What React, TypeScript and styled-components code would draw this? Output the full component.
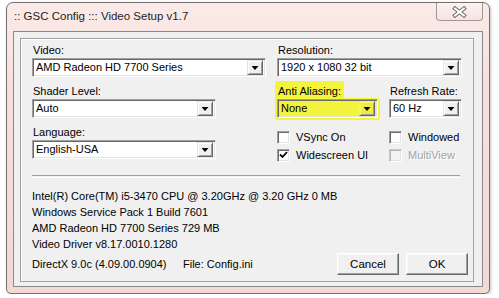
import styled, { createGlobalStyle } from "styled-components";

const GlobalStyle = createGlobalStyle`
  body {
    margin: 0;
    background: #fff;
    font-family: "Liberation Sans", Arial, sans-serif;
    font-size: 11px;
    color: #000;
  }
`;

const Window = styled.div`
  margin: 2px 0 0 6px;
  width: 484px;
  height: 292px;
  box-sizing: border-box;
  border: 1px solid #76706f;
  border-radius: 7px 7px 5px 5px;
  background: linear-gradient(#fbeae8, #f6dfdb 30%, #f3d9d5);
  box-shadow: 1px 1px 3px rgba(0, 0, 0, 0.25);
  display: flex;
  flex-direction: column;
`;

const TitleBar = styled.div`
  height: 28px;
  display: flex;
  justify-content: space-between;
  align-items: flex-start;
  padding: 0 6px 0 7px;
`;

const Title = styled.span`
  margin-top: 6px;
  line-height: 14px;
  font-size: 11.5px;
  color: #1e1e1e;
`;

const CloseBtn = styled.div`
  width: 47px;
  height: 18px;
  box-sizing: border-box;
  border: 1px solid #a39494;
  border-top: none;
  border-radius: 0 0 4px 4px;
  background: linear-gradient(#fcf2f1, #f6e3e1);
  display: flex;
  align-items: center;
  justify-content: center;
`;

const Client = styled.div`
  flex: 1;
  margin: 0 6px 6px 6px;
  border: 1px solid #8c8888;
  background: #f0f0f0;
  padding: 6px 8px 4px 6px;
  display: flex;
`;

const Group = styled.div`
  flex: 1;
  border: 1px solid #a0a0a0;
  box-shadow: inset 1px 1px 0 #fff;
  padding: 4px 11px 6px 11px;
  display: flex;
  flex-direction: column;
`;

const Top = styled.div`
  display: flex;
  gap: 11px;
`;

const Column = styled.div<{ $w: number }>`
  width: ${(p) => p.$w}px;
  display: flex;
  flex-direction: column;
  gap: 7px;
`;

const Pair = styled.div`
  display: flex;
  justify-content: space-between;
`;

const Field = styled.div`
  display: flex;
  flex-direction: column;
  align-items: flex-start;
  gap: 1px;
`;

const Label = styled.span<{ $hl?: boolean }>`
  line-height: 14px;
  height: 14px;
  padding: 0 ${(p) => (p.$hl ? "3px" : "1px")};
  margin-left: ${(p) => (p.$hl ? "-2px" : "0")};
  margin-top: ${(p) => (p.$hl ? "-3px" : "0")};
  padding-top: ${(p) => (p.$hl ? "3px" : "0")};
  background: ${(p) => (p.$hl ? "#f4f33e" : "transparent")};
  border-radius: 2px 2px 0 0;
`;

const SelectWrap = styled.div<{ $hl?: boolean }>`
  background: ${(p) => (p.$hl ? "#f4f33e" : "transparent")};
  margin: ${(p) => (p.$hl ? "-1px -2px -2px -2px" : "0")};
  padding: ${(p) => (p.$hl ? "1px 2px 2px 2px" : "0")};
  border-radius: 0 3px 3px 3px;
`;

const Select = styled.div<{ $w: number; $hl?: boolean }>`
  width: ${(p) => p.$w}px;
  height: 19px;
  box-sizing: border-box;
  display: flex;
  align-items: center;
  justify-content: space-between;
  background: ${(p) => (p.$hl ? "#f4f33e" : "#fff")};
  border: 1px solid;
  border-color: #a0a0a0 #fff #fff #a0a0a0;
  box-shadow: inset 1px 1px 0 #696969, inset -1px -1px 0 #e3e3e3;
  padding: 2px 2px 2px 3px;
`;

const Value = styled.span`
  line-height: 15px;
  white-space: nowrap;
`;

const ArrowBtn = styled.span<{ $hl?: boolean }>`
  width: 16px;
  height: 15px;
  box-sizing: border-box;
  background: ${(p) => (p.$hl ? "#eeed3c" : "#f0f0f0")};
  border: 1px solid;
  border-color: #e3e3e3 #696969 #696969 #e3e3e3;
  box-shadow: inset 1px 1px 0 ${(p) => (p.$hl ? "#f8f77a" : "#fff")},
    inset -1px -1px 0 #a0a0a0;
  display: flex;
  align-items: center;
  justify-content: center;
  &::after {
    content: "";
    width: 7px;
    height: 4px;
    background: #000;
    clip-path: polygon(0 0, 100% 0, 50% 100%);
    margin-top: 1px;
  }
`;

const Checks = styled.div`
  margin-top: 3px;
  display: grid;
  grid-template-columns: 112px 1fr;
  grid-auto-rows: 18px;
`;

const CheckRow = styled.label<{ $disabled?: boolean }>`
  display: flex;
  align-items: center;
  gap: 6px;
  color: ${(p) => (p.$disabled ? "#a3a3a3" : "#000")};
  text-shadow: ${(p) => (p.$disabled ? "1px 1px 0 #fff" : "none")};
`;

const Box = styled.span<{ $disabled?: boolean }>`
  width: 13px;
  height: 13px;
  box-sizing: border-box;
  background: ${(p) => (p.$disabled ? "#f4f4f4" : "#fff")};
  border: 1px solid;
  border-color: ${(p) =>
    p.$disabled ? "#c8c8c8 #fff #fff #c8c8c8" : "#a0a0a0 #fff #fff #a0a0a0"};
  box-shadow: inset 1px 1px 0 ${(p) => (p.$disabled ? "#b4b4b4" : "#696969")},
    inset -1px -1px 0 #e3e3e3;
  display: flex;
  align-items: center;
  justify-content: center;
`;

const Separator = styled.div`
  margin: 11px 2px 0 0;
  height: 1px;
  border-top: 1px solid #a0a0a0;
  border-bottom: 1px solid #fff;
`;

const Info = styled.div`
  margin-top: 10px;
  line-height: 16px;
  white-space: nowrap;
`;

const Footer = styled.div`
  margin-top: auto;
  margin-right: -6px;
  display: flex;
  align-items: center;
`;

const DxText = styled.span`
  width: 151px;
`;

const Buttons = styled.div`
  margin-left: auto;
  display: flex;
  gap: 7px;
`;

const Button = styled.button`
  width: 62px;
  height: 22px;
  box-sizing: border-box;
  background: #f0f0f0;
  border: 1px solid;
  border-color: #fff #696969 #696969 #fff;
  box-shadow: inset -1px -1px 0 #a0a0a0, inset 1px 1px 0 #f6f6f6;
  font-family: "Liberation Sans", Arial, sans-serif;
  font-size: 11.5px;
  color: #000;
  padding: 0;
`;

const Check = () => (
  <svg width="9" height="8" viewBox="0 0 9 8">
    <polyline points="1,3.5 3.5,6 8,1" fill="none" stroke="#000" strokeWidth="1.8" />
  </svg>
);

const CloseGlyph = () => (
  <svg width="15" height="12" viewBox="0 0 15 12">
    <g strokeLinecap="square">
      <line x1="3" y1="2.5" x2="12" y2="9.5" stroke="#6e6666" strokeWidth="4" />
      <line x1="12" y1="2.5" x2="3" y2="9.5" stroke="#6e6666" strokeWidth="4" />
      <line x1="3" y1="2.5" x2="12" y2="9.5" stroke="#fdfbfb" strokeWidth="2" />
      <line x1="12" y1="2.5" x2="3" y2="9.5" stroke="#fdfbfb" strokeWidth="2" />
    </g>
  </svg>
);

type DropProps = { label: string; value: string; width: number; hl?: boolean };

const Dropdown = ({ label, value, width, hl }: DropProps) => (
  <Field>
    <Label $hl={hl}>{label}</Label>
    <SelectWrap $hl={hl}>
      <Select $w={width} $hl={hl}>
        <Value>{value}</Value>
        <ArrowBtn $hl={hl} />
      </Select>
    </SelectWrap>
  </Field>
);

const CheckItem = ({
  text,
  checked,
  disabled,
}: {
  text: string;
  checked?: boolean;
  disabled?: boolean;
}) => (
  <CheckRow $disabled={disabled}>
    <Box $disabled={disabled}>{checked && <Check />}</Box>
    {text}
  </CheckRow>
);

const infoLines = [
  "Intel(R) Core(TM) i5-3470 CPU @ 3.20GHz @ 3.20 GHz 0 MB",
  "Windows Service Pack 1 Build 7601",
  "AMD Radeon HD 7700 Series 729 MB",
  "Video Driver v8.17.0010.1280",
];

export default function App() {
  return (
    <>
      <GlobalStyle />
      <Window>
        <TitleBar>
          <Title>:: GSC Config ::: Video Setup v1.7</Title>
          <CloseBtn>
            <CloseGlyph />
          </CloseBtn>
        </TitleBar>
        <Client>
          <Group>
            <Top>
              <Column $w={234}>
                <Dropdown label="Video:" value="AMD Radeon HD 7700 Series" width={234} />
                <Dropdown label="Shader Level:" value="Auto" width={184} />
                <Dropdown label="Language:" value="English-USA" width={184} />
              </Column>
              <Column $w={185}>
                <Dropdown label="Resolution:" value="1920 x 1080 32 bit" width={185} />
                <Pair>
                  <Dropdown label="Anti Aliasing:" value="None" width={101} hl />
                  <Dropdown label="Refresh Rate:" value="60 Hz" width={73} />
                </Pair>
                <Checks>
                  <CheckItem text="VSync On" />
                  <CheckItem text="Windowed" />
                  <CheckItem text="Widescreen UI" checked />
                  <CheckItem text="MultiView" disabled />
                </Checks>
              </Column>
            </Top>
            <Separator />
            <Info>
              {infoLines.map((l) => (
                <div key={l}>{l}</div>
              ))}
            </Info>
            <Footer>
              <DxText>DirectX 9.0c (4.09.00.0904)</DxText>
              <span>File: Config.ini</span>
              <Buttons>
                <Button>Cancel</Button>
                <Button>OK</Button>
              </Buttons>
            </Footer>
          </Group>
        </Client>
      </Window>
    </>
  );
}
